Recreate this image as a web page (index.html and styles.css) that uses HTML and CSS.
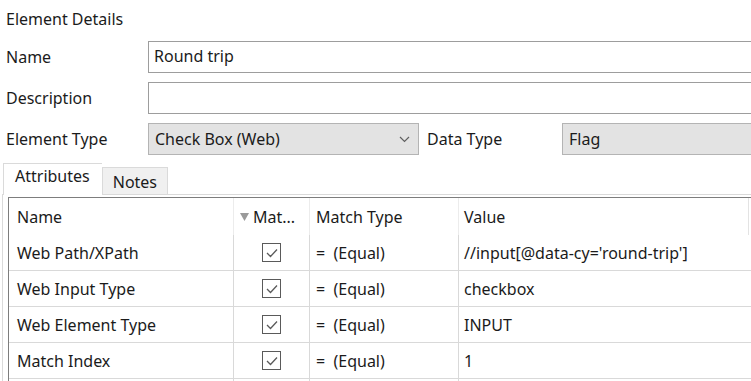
FILE: index.html
```html
<!DOCTYPE html>
<html lang="en">
<head>
    <meta charset="UTF-8">
    <meta name="viewport" content="width=device-width, initial-scale=1.0">
    <title>Element Details</title>
    <link rel="stylesheet" href="styles.css">
</head>
<body>
    <div class="details">
        <div class="heading">Element Details</div>

        <div class="form-row">
            <label class="label">Name</label>
            <div class="field">Round trip</div>
        </div>
        <div class="form-row">
            <label class="label">Description</label>
            <div class="field"></div>
        </div>
        <div class="form-row">
            <label class="label">Element Type</label>
            <div class="select">
                <span>Check Box (Web)</span>
                <svg class="chevron" width="11" height="7" viewBox="0 0 11 7">
                    <path d="M1 1 L5.5 5.5 L10 1" fill="none" stroke="#606060" stroke-width="1.2"/>
                </svg>
            </div>
            <label class="label data-label">Data Type</label>
            <div class="select flag">Flag</div>
        </div>
    </div>

    <div class="tabs">
        <div class="tab active">Attributes</div>
        <div class="tab">Notes</div>
    </div>

    <div class="panel">
        <div class="grid">
            <div class="row head">
                <div class="cell c-name">Name</div>
                <div class="cell c-match">
                    <svg class="sort" width="9" height="8" viewBox="0 0 9 8">
                        <path d="M0 0 H9 L4.5 8 Z" fill="#9a9a9a"/>
                    </svg>
                    Mat...
                </div>
                <div class="cell c-type">Match Type</div>
                <div class="cell c-value">Value</div>
                <div class="cell c-extra"></div>
            </div>
        </div>
    </div>

    <script>
        let rows = [
            { name: "Web Path/XPath", value: "//input[@data-cy='round-trip']" },
            { name: "Web Input Type", value: "checkbox" },
            { name: "Web Element Type", value: "INPUT" },
            { name: "Match Index", value: "1" },
            { name: "", value: "" }
        ];

        let grid = document.querySelector(".grid");

        rows.forEach(item => {
            let row = document.createElement("div");
            row.className = "row";
            let check = item.name ? `
                <span class="check">
                    <svg width="12" height="10" viewBox="0 0 12 10">
                        <path d="M1 5 L4.5 8.5 L11 1.5" fill="none" stroke="#5a5a5a" stroke-width="1.3"/>
                    </svg>
                </span>` : "";
            row.innerHTML = `
                <div class="cell c-name">${item.name}</div>
                <div class="cell c-match center">${check}</div>
                <div class="cell c-type">${item.name ? "=&nbsp;&nbsp;(Equal)" : ""}</div>
                <div class="cell c-value">${item.value}</div>
            `;
            grid.appendChild(row);
        });
    </script>
</body>
</html>
```

FILE: styles.css
```css
body {
    margin: 0;
    background: #ffffff;
    font-family: "Noto Sans", "Open Sans", sans-serif;
    font-size: 16px;
    color: #1b1b1b;
    overflow: hidden;
}
.details {
    padding-left: 6px;
}
.heading {
    height: 41px;
    line-height: 38px;
}
.form-row {
    display: flex;
    align-items: center;
    height: 32px;
    margin-bottom: 9px;
}
.label {
    width: 142px;
    flex-shrink: 0;
}
.field {
    flex: 1;
    height: 30px;
    line-height: 29px;
    border: 1px solid #9d9d9d;
    border-right: none;
    padding-left: 5px;
}
.select {
    width: 263px;
    height: 30px;
    line-height: 29px;
    background: #e3e3e3;
    border: 1px solid #b4b4b4;
    padding-left: 6px;
    display: flex;
    justify-content: space-between;
    align-items: center;
}
.chevron {
    margin-right: 8px;
}
.data-label {
    width: 135px;
    padding-left: 8px;
}
.flag {
    flex: 1;
    border-right: none;
}
.tabs {
    display: flex;
    margin-top: 1px;
    padding-left: 3px;
    height: 30px;
    align-items: flex-end;
}
.tab {
    height: 26px;
    line-height: 28px;
    padding: 0 10px;
    background: #f0f0f0;
    border: 1px solid #dadada;
    border-bottom: none;
}
.tab.active {
    height: 31px;
    line-height: 25px;
    background: #ffffff;
    padding: 0 12px 0 11px;
    margin-bottom: -1px;
    position: relative;
    z-index: 1;
    border-right: none;
}
.panel {
    margin-left: 2px;
    border-top: 1px solid #dadada;
    border-left: 1px solid #dadada;
    padding: 2px 0 0 5px;
}
.grid {
    border-top: 1px solid #7d7d7d;
    border-left: 1px solid #7d7d7d;
}
.row {
    display: flex;
    height: 35px;
    border-bottom: 1px solid #d9d9d9;
}
.row.head {
    height: 37px;
    border-bottom: none;
}
.cell {
    display: flex;
    align-items: center;
    padding-left: 8px;
    flex-shrink: 0;
    box-sizing: border-box;
    white-space: nowrap;
}
.c-name {
    width: 225px;
    border-right: 1px solid #d9d9d9;
}
.c-match {
    width: 76px;
    border-right: 1px solid #d9d9d9;
    padding-left: 6px;
}
.c-match.center {
    justify-content: center;
    padding-left: 0;
}
.c-type {
    width: 149px;
    border-right: 1px solid #d9d9d9;
    padding-left: 6px;
}
.c-value {
    width: 290px;
    padding-left: 5px;
}
.head .c-name,
.head .c-match,
.head .c-type {
    border-right: 1px solid #ececec;
}
.head .c-value {
    border-right: 1px solid #e3e3e3;
}
.sort {
    margin-right: 4px;
}
.check {
    width: 17px;
    height: 17px;
    border: 1px solid #5a5a5a;
    display: flex;
    align-items: center;
    justify-content: center;
}
```
